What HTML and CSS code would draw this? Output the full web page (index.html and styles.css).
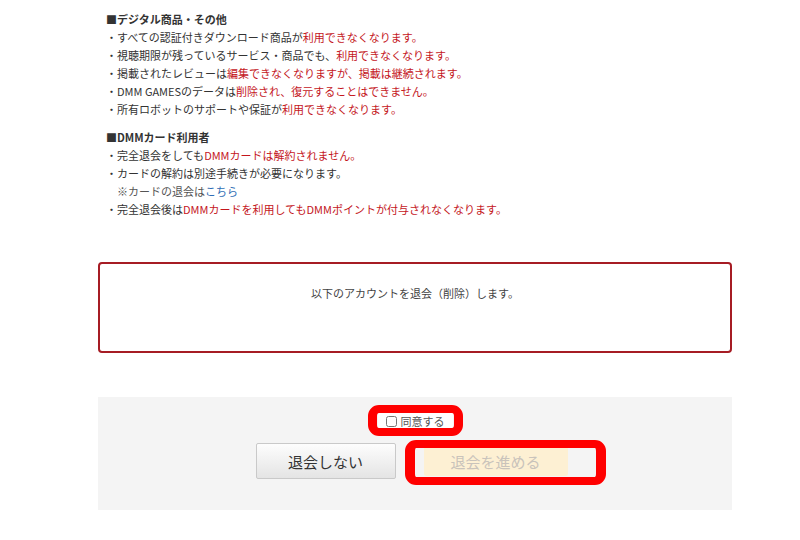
FILE: index.html
```html
<!doctype html>
<html lang="ja">
<head>
  <meta charset="UTF-8" />
  <meta name="viewport" content="width=device-width,initial-scale=1" />
  <title>退会手続き</title>
  <link rel="stylesheet" href="styles.css">
</head>
<body>
  <main class="page">
    <section class="notes">
      <h3>■デジタル商品・その他</h3>
      <ul>
        <li>・すべての認証付きダウンロード商品が<em>利用できなくなります。</em></li>
        <li>・視聴期限が残っているサービス・商品でも、<em>利用できなくなります。</em></li>
        <li>・掲載されたレビューは<em>編集できなくなりますが、掲載は継続されます。</em></li>
        <li>・DMM GAMESのデータは<em>削除され、復元することはできません。</em></li>
        <li>・所有ロボットのサポートや保証が<em>利用できなくなります。</em></li>
      </ul>
    </section>

    <section class="notes">
      <h3>■DMMカード利用者</h3>
      <ul>
        <li>・完全退会をしても<em>DMMカードは解約されません。</em></li>
        <li>・カードの解約は別途手続きが必要になります。</li>
        <li class="sub">※カードの退会は<a href="#">こちら</a></li>
        <li>・完全退会後は<em>DMMカードを利用してもDMMポイントが付与されなくなります。</em></li>
      </ul>
    </section>

    <div class="confirm-box">
      <p>以下のアカウントを退会（削除）します。</p>
    </div>

    <div class="action">
      <label class="agree"><input type="checkbox"> 同意する</label>
      <div class="btns">
        <button class="cancel">退会しない</button>
        <button class="proceed" disabled>退会を進める</button>
      </div>
    </div>
  </main>
</body>
</html>
```

FILE: styles.css
```css
:root { --red:#c4161c; --text:#333; --line:#a61c24; }
*{ box-sizing:border-box; }
body{
  margin:0;
  background:#fff;
  color:var(--text);
  font-family:"Noto Sans CJK JP", "Noto Sans", sans-serif;
  font-size:11px;
}
.page{
  width:634px;
  margin-left:98px;
  padding-top:10px;
}
.notes{ padding-left:8px; margin-bottom:10px; }
.notes h3{
  margin:0;
  font-size:11px;
  line-height:18px;
  font-weight:700;
}
.notes ul{ list-style:none; margin:0; padding:0; }
.notes li{ line-height:18px; }
.notes li.sub{ padding-left:11px; color:#555; }
.notes em{ font-style:normal; color:var(--red); }
.notes a{ color:#2f6db5; text-decoration:none; }

.confirm-box{
  margin-top:44px;
  height:91px;
  border:2px solid var(--line);
  border-radius:4px;
  padding-top:20px;
  text-align:center;
}
.confirm-box p{ margin:0; line-height:18px; color:#444; }

.action{
  margin-top:44px;
  background:#f4f4f4;
  height:113px;
  padding-top:16px;
  display:flex;
  flex-direction:column;
  align-items:center;
}
.agree{
  position:relative;
  display:inline-flex;
  align-items:center;
  gap:4px;
  height:16px;
  padding:0 8px 0 8px;
  background:#fff;
  color:#555;
  line-height:16px;
}
.agree input{ margin:0; width:11px; height:11px; }
.agree::after{
  content:"";
  position:absolute;
  inset:-8px -10px -7px -10px;
  border:8px solid #f00;
  border-width:8px 9px;
  border-radius:11px;
  pointer-events:none;
}
.btns{
  margin-top:14px;
  display:flex;
  align-items:center;
  gap:28px;
  padding-right:7px;
}
button{
  font-family:inherit;
  font-size:15px;
  border-radius:2px;
  cursor:pointer;
}
.cancel{
  width:140px;
  height:36px;
  border:1px solid #c9c9c9;
  background:linear-gradient(#fdfdfd, #e4e4e4);
  color:#333;
}
.proceed{
  position:relative;
  width:144px;
  height:29px;
  border:0;
  background:#fdf0d3;
  color:#c9c3bb;
  cursor:default;
}
.proceed::after{
  content:"";
  position:absolute;
  inset:-7px -38px -9px -19px;
  border:8px solid #f00;
  border-width:8px 10px;
  border-radius:11px;
  pointer-events:none;
}
```
